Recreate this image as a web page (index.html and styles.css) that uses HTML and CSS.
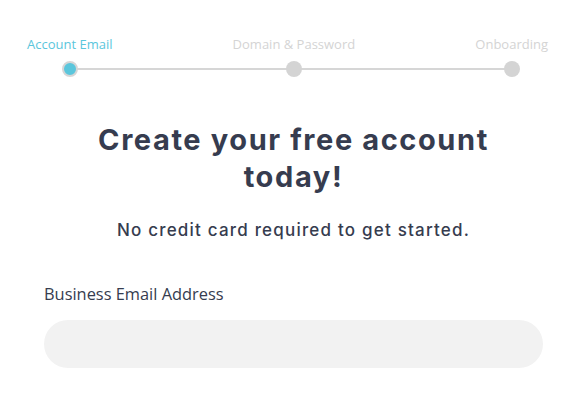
FILE: index.html
```html
<!DOCTYPE html>
<html lang="en">
<head>
    <meta charset="UTF-8">
    <meta name="viewport" content="width=device-width, initial-scale=1.0">
    <title>Create your free account</title>
    <link rel="stylesheet" href="styles.css">
</head>
<body>

    <div class="stepper">
        <div class="stepper-line"></div>
        <div class="step active">
            <span class="step-label">Account Email</span>
            <span class="step-dot"></span>
        </div>
        <div class="step">
            <span class="step-label">Domain &amp; Password</span>
            <span class="step-dot"></span>
        </div>
        <div class="step">
            <span class="step-label">Onboarding</span>
            <span class="step-dot"></span>
        </div>
    </div>

    <div class="signup">
        <h1 class="title">Create your free account today!</h1>
        <p class="subtitle">No credit card required to get started.</p>

        <form class="signup-form">
            <label class="field-label" for="email">Business Email Address</label>
            <input class="field-input" type="email" id="email">
        </form>
    </div>

</body>
</html>
```

FILE: styles.css
```css
body {
    margin: 0;
    background-color: #ffffff;
    font-family: "Open Sans", "Noto Sans", sans-serif;
    color: #363c4f;
}

/* Progress steps */
.stepper {
    position: relative;
    display: flex;
    justify-content: space-between;
    padding: 34px 31px 0 27px;
}

.stepper-line {
    position: absolute;
    left: 70px;
    right: 67px;
    top: 68px;
    height: 2px;
    background-color: #d6d6d6;
}

.step {
    position: relative;
    display: flex;
    flex-direction: column;
    align-items: center;
    gap: 7px;
}

.step-label {
    font-size: 13px;
    line-height: 20px;
    color: #d4d4d4;
}

.step-dot {
    width: 16px;
    height: 16px;
    border-radius: 50%;
    background-color: #d4d4d4;
    box-sizing: border-box;
}

.step.active .step-label {
    color: #5bc6dc;
}

.step.active .step-dot {
    background-color: #5bc6dc;
    border: 2px solid #d6d6d6;
}

/* Heading */
.signup {
    padding: 0 36px 0 44px;
}

.title {
    margin: 44px auto 0;
    max-width: 440px;
    text-align: center;
    font-family: Inter, "Noto Sans", sans-serif;
    font-weight: 700;
    font-size: 29px;
    line-height: 37px;
    letter-spacing: 1.6px;
    color: #363c4f;
}

.subtitle {
    margin: 23px 0 0;
    text-align: center;
    font-family: Inter, "Noto Sans", sans-serif;
    font-weight: 500;
    font-size: 17px;
    line-height: 24px;
    letter-spacing: 1.2px;
    color: #363c4f;
}

/* Form */
.signup-form {
    display: flex;
    flex-direction: column;
    margin-top: 41px;
}

.field-label {
    font-size: 16.4px;
    line-height: 22px;
    color: #363c4f;
}

.field-input {
    margin-top: 15px;
    height: 48px;
    border: none;
    border-radius: 24px;
    background-color: #f2f2f2;
    padding: 0 22px;
    font-size: 16px;
    outline: none;
}
```
